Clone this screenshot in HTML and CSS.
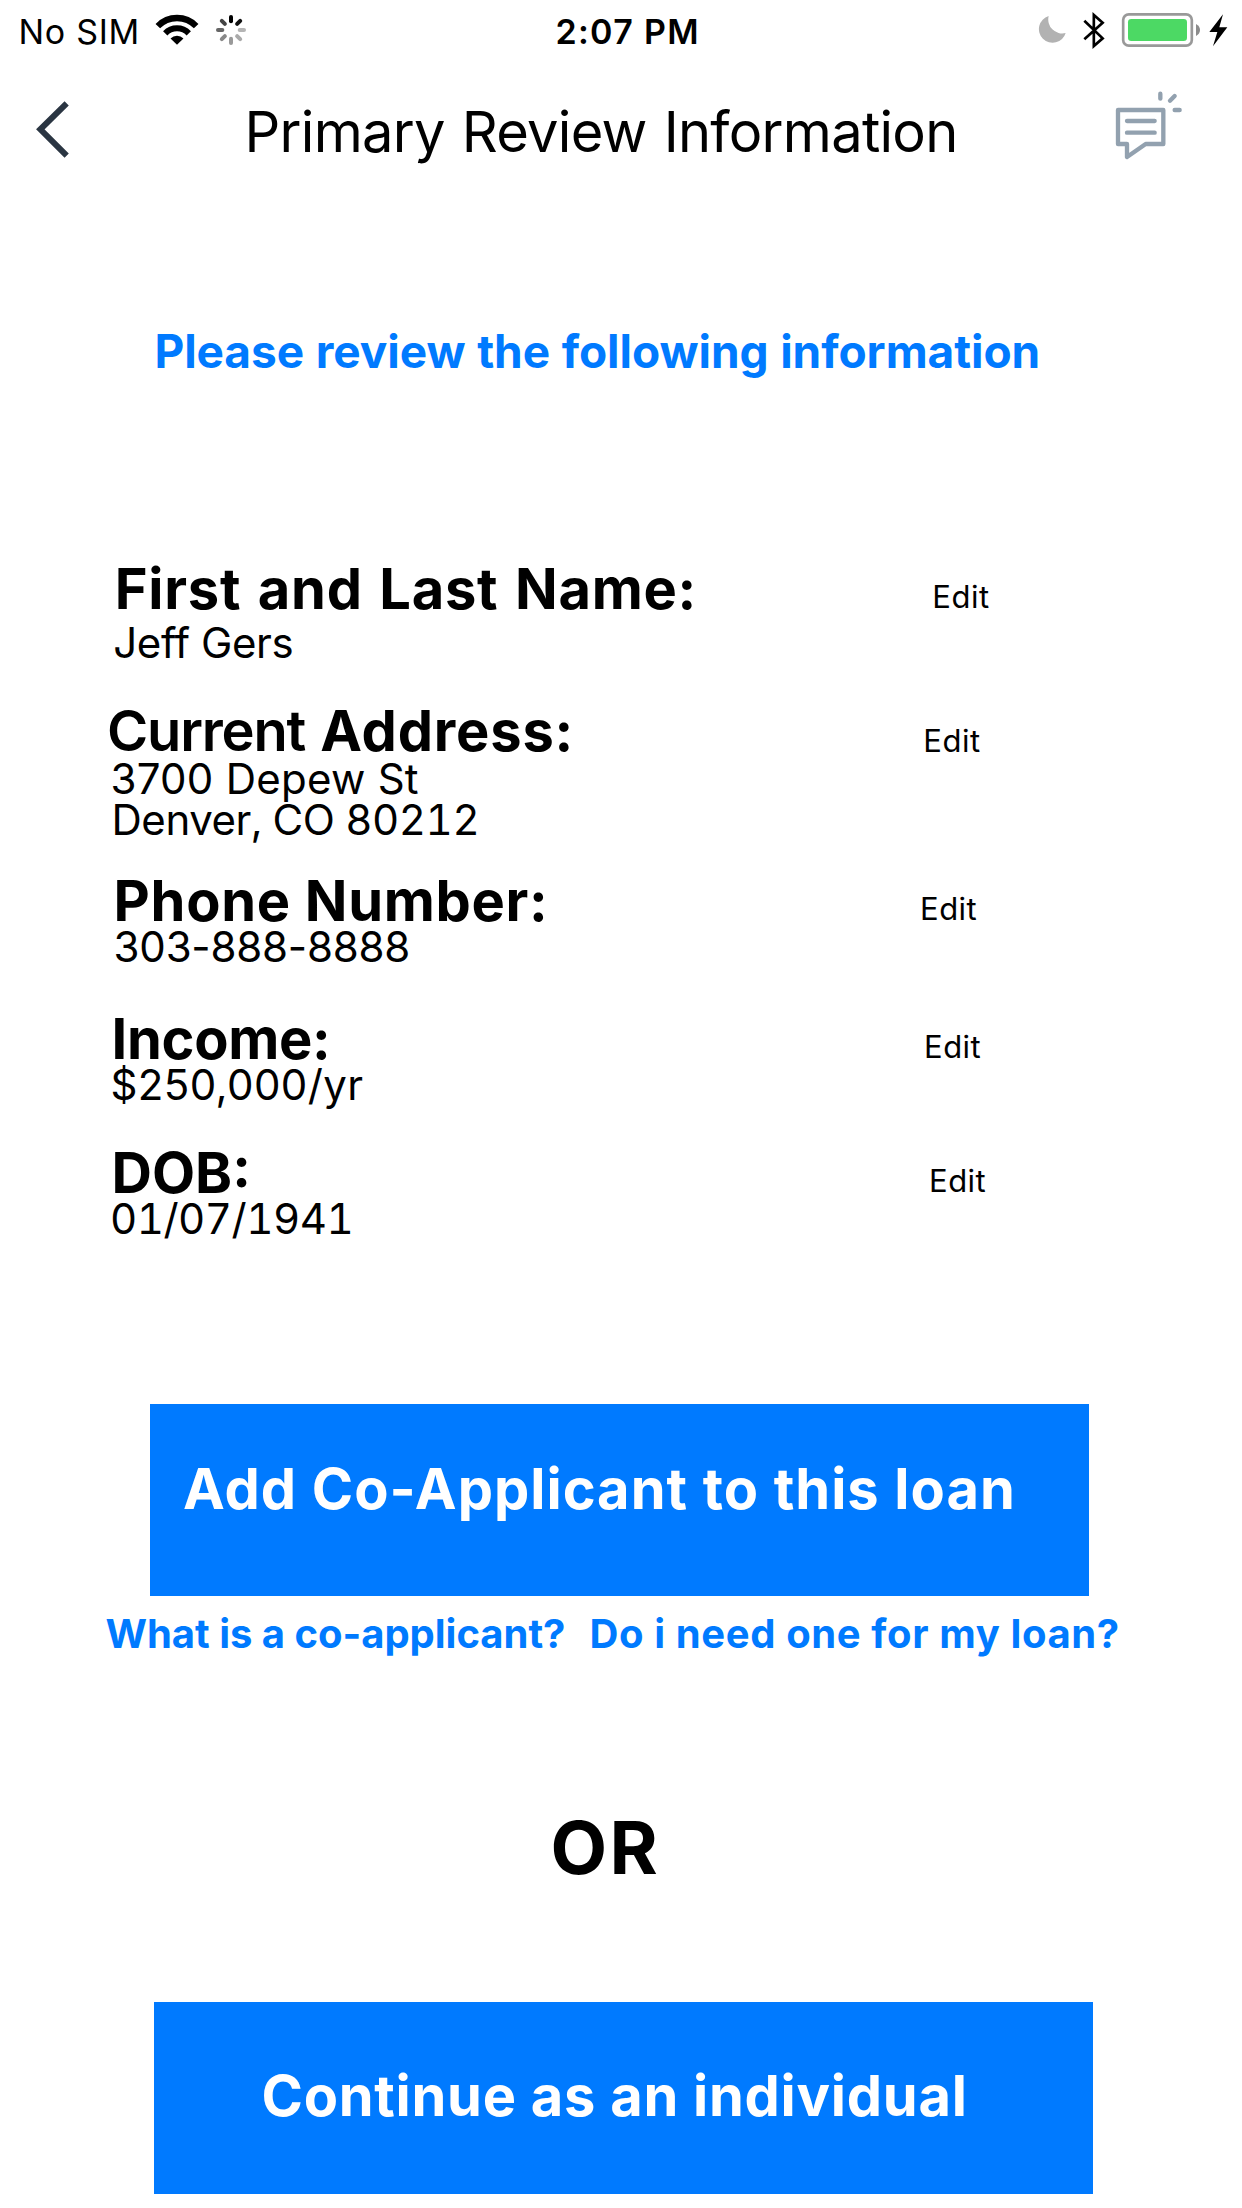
FILE: index.html
```html
<!DOCTYPE html>
<html lang="en">
<head>
<meta charset="utf-8">
<title>Primary Review Information</title>
<link rel="stylesheet" href="styles.css">
</head>
<body>
<div class="status">
  <div class="status-left">
    <span class="carrier">No SIM</span>
    <svg class="wifi" viewBox="465 0 180 192" fill="none" stroke="#000">
      <path d="M473.500 78.400A80 80 0 0 1 588.500 78.400" stroke-width="19"/>
      <path d="M495.700 100A49 49 0 0 1 566.300 100" stroke-width="18"/>
      <path d="M531 134L511.600 115.200A27 27 0 0 1 550.400 115.200Z" fill="#000" stroke="none"/>
    </svg>
    <svg class="spinner" viewBox="645 0 96 192" fill="none" stroke-width="12" stroke-linecap="round">
      <path d="M693 64V51" stroke="#000"/>
      <path d="M711.400 71.600L720.600 62.400" stroke="#111"/>
      <path d="M719 90H732" stroke="#b5b5b5"/>
      <path d="M711.400 108.400L720.600 117.600" stroke="#aaa"/>
      <path d="M693 116V129" stroke="#999"/>
      <path d="M674.600 108.400L665.400 117.600" stroke="#888"/>
      <path d="M667 90H654" stroke="#666"/>
      <path d="M674.600 71.600L665.400 62.400" stroke="#444"/>
    </svg>
  </div>
  <span class="clock">2:07 PM</span>
  <div class="status-right">
    <svg class="moon" viewBox="650 0 135 192"><path d="M685 48A41 41 0 1 0 736 99A42 42 0 0 1 685 48Z" fill="#b2b2b2"/></svg>
    <svg class="bluetooth" viewBox="785 0 115 192" fill="none" stroke="#000" stroke-width="8"><path d="M792 62L847 115L820.500 138V45L847 68L792 118"/></svg>
    <svg class="battery" viewBox="900 0 260 192">
      <rect x="909.500" y="43" width="206" height="94" rx="17" fill="none" stroke="#999" stroke-width="8"/>
      <rect x="924" y="57" width="177" height="66" rx="10" fill="#4cd964"/>
      <path d="M1128 72Q1140 78 1140 90T1128 108Z" fill="#8c8c8c"/>
    </svg>
    <svg class="bolt" viewBox="1160 0 106 192"><path d="M1208 43L1167 96H1191L1178 139L1221 82H1197Z"/></svg>
  </div>
</div>
<header class="nav">
  <svg class="back" viewBox="0 192 733.500 399" fill="none" stroke="#2a3542" stroke-width="18"><path d="M200 310L121 388L200 467"/></svg>
  <h1 class="title">Primary Review Information</h1>
  <svg class="chat" viewBox="880 192 386 399" fill="none" stroke="#92a1af" stroke-width="13" stroke-linecap="round" stroke-linejoin="round">
    <path d="M895 330H1031V432H978L922 471V432H895Z"/>
    <path d="M922 363H1005M922 398H1005M1022 281V296M1065 288L1051 302M1065 330H1080"/>
  </svg>
</header>
<main>
  <h2 class="lead">Please review the following information</h2>
  <section class="field name">
    <div class="info"><h3 class="label">First and Last Name:</h3><p class="value">Jeff Gers</p></div>
    <a class="edit">Edit</a>
  </section>
  <section class="field address">
    <div class="info"><h3 class="label"><span class="soft">Current</span> <span class="strong">Address:</span></h3><p class="value">3700 Depew St</p><p class="value city">Denver, CO 80212</p></div>
    <a class="edit">Edit</a>
  </section>
  <section class="field phone">
    <div class="info"><h3 class="label">Phone Number:</h3><p class="value">303-888-8888</p></div>
    <a class="edit">Edit</a>
  </section>
  <section class="field income">
    <div class="info"><h3 class="label">Income:</h3><p class="value">$250,000/yr</p></div>
    <a class="edit">Edit</a>
  </section>
  <section class="field dob">
    <div class="info"><h3 class="label">DOB:</h3><p class="value">01/07/1941</p></div>
    <a class="edit">Edit</a>
  </section>
  <div class="button add">Add Co-Applicant to this loan</div>
  <a class="help"><span class="what">What is a co-applicant?  </span><span>Do i need one for my loan?</span></a>
  <p class="or">OR</p>
  <div class="button continue">Continue as an individual</div>
</main>
</body>
</html>
```
FILE: styles.css
```css
* { box-sizing: border-box; }
body { margin: 0; width: 1242px; height: 2208px; background: #fff; color: #000; font-family: Inter, "Liberation Sans", sans-serif; overflow: hidden; }
h1, h2, h3, p { margin: 0; white-space: pre; }
svg { display: block; flex: none; }

.status { display: flex; height: 64px; font-size: 34px; line-height: 63px; white-space: nowrap; }
.status-left { display: flex; width: 555.5px; padding-left: 18.5px; }
.status svg { height: 64px; }
.carrier { width: 136.5px; letter-spacing: .7px; }
.wifi { width: 60px; }
.spinner { width: 32px; }
.clock { font-weight: 600; letter-spacing: 1.3px; }
.status-right { display: flex; margin-left: auto; }
.moon { width: 45px; }
.bluetooth { width: 38.33px; }
.battery { width: 86.67px; }
.bolt { width: 35.33px; }

.nav { display: flex; height: 133px; }
.nav svg { height: 133px; }
.back { width: 244.5px; }
.title { font-size: 56px; line-height: 136px; font-weight: 400; letter-spacing: -.72px; word-spacing: 2px; }
.chat { width: 128.67px; margin-left: auto; }

.lead { margin: 124px 0 183px 154.4px; color: #007aff; font-size: 46px; line-height: 60px; font-weight: 700; letter-spacing: -.05px; word-spacing: .8px; }

.field { display: flex; align-items: flex-start; }
.info { width: 920px; }
.label { font-size: 56px; line-height: 50px; font-weight: 700; }
.value { font-size: 42px; line-height: 41.4px; }
.edit { padding-top: 13.4px; font-size: 31px; line-height: 40px; letter-spacing: .5px; }

.name { height: 142px; }
.name .info { width: 932.3px; padding-left: 114.7px; }
.name .label { letter-spacing: .75px; word-spacing: 2.6px; }
.name .value { margin: 7.5px 0 0 -1.5px; letter-spacing: -.38px; }
.name .edit { padding-top: 12.6px; }

.address { height: 169.6px; }
.address .info { width: 923.3px; padding-left: 107px; }
.address .label { display: flex; margin-bottom: 2px; }
.soft { width: 213.3px; font-weight: 600; letter-spacing: -1.2px; }
.strong { letter-spacing: .8px; }
.address .value { margin-left: 3.5px; letter-spacing: .26px; }
.address .city { margin-left: 4.5px; letter-spacing: -.45px; font-variant-numeric: tabular-nums; }
.address .edit { padding-top: 15px; }

.phone { height: 138px; }
.phone .info { padding-left: 113.6px; }
.phone .label { letter-spacing: .7px; }
.phone .value { letter-spacing: -.2px; }

.income { height: 134px; }
.income .info { width: 924px; padding-left: 111.5px; }
.income .label { letter-spacing: -.3px; }
.income .value { margin-left: -1px; letter-spacing: .4px; }

.dob { height: 256.4px; }
.dob .info { width: 929px; padding: .6px 0 0 111.5px; }
.dob .value { margin-left: -1.5px; letter-spacing: -.5px; font-variant-numeric: tabular-nums; }

.button { width: 939px; height: 192px; background: #007aff; color: #fff; font-size: 56px; font-weight: 700; white-space: nowrap; }
.add { margin-left: 150px; padding-left: 33px; line-height: 171px; letter-spacing: 1px; word-spacing: .4px; }
.help { display: block; margin: 8px 0 139px 105.5px; color: #007aff; font-size: 40px; line-height: 60px; font-weight: 700; letter-spacing: .62px; white-space: pre; }
.what { display: inline-block; width: 484px; letter-spacing: -.02px; }
.or { margin: 0 0 109px 550.6px; font-size: 73.5px; line-height: 90px; font-weight: 700; letter-spacing: 2.2px; }
.continue { margin-left: 154px; padding-left: 107.5px; line-height: 189px; letter-spacing: .74px; }
```
